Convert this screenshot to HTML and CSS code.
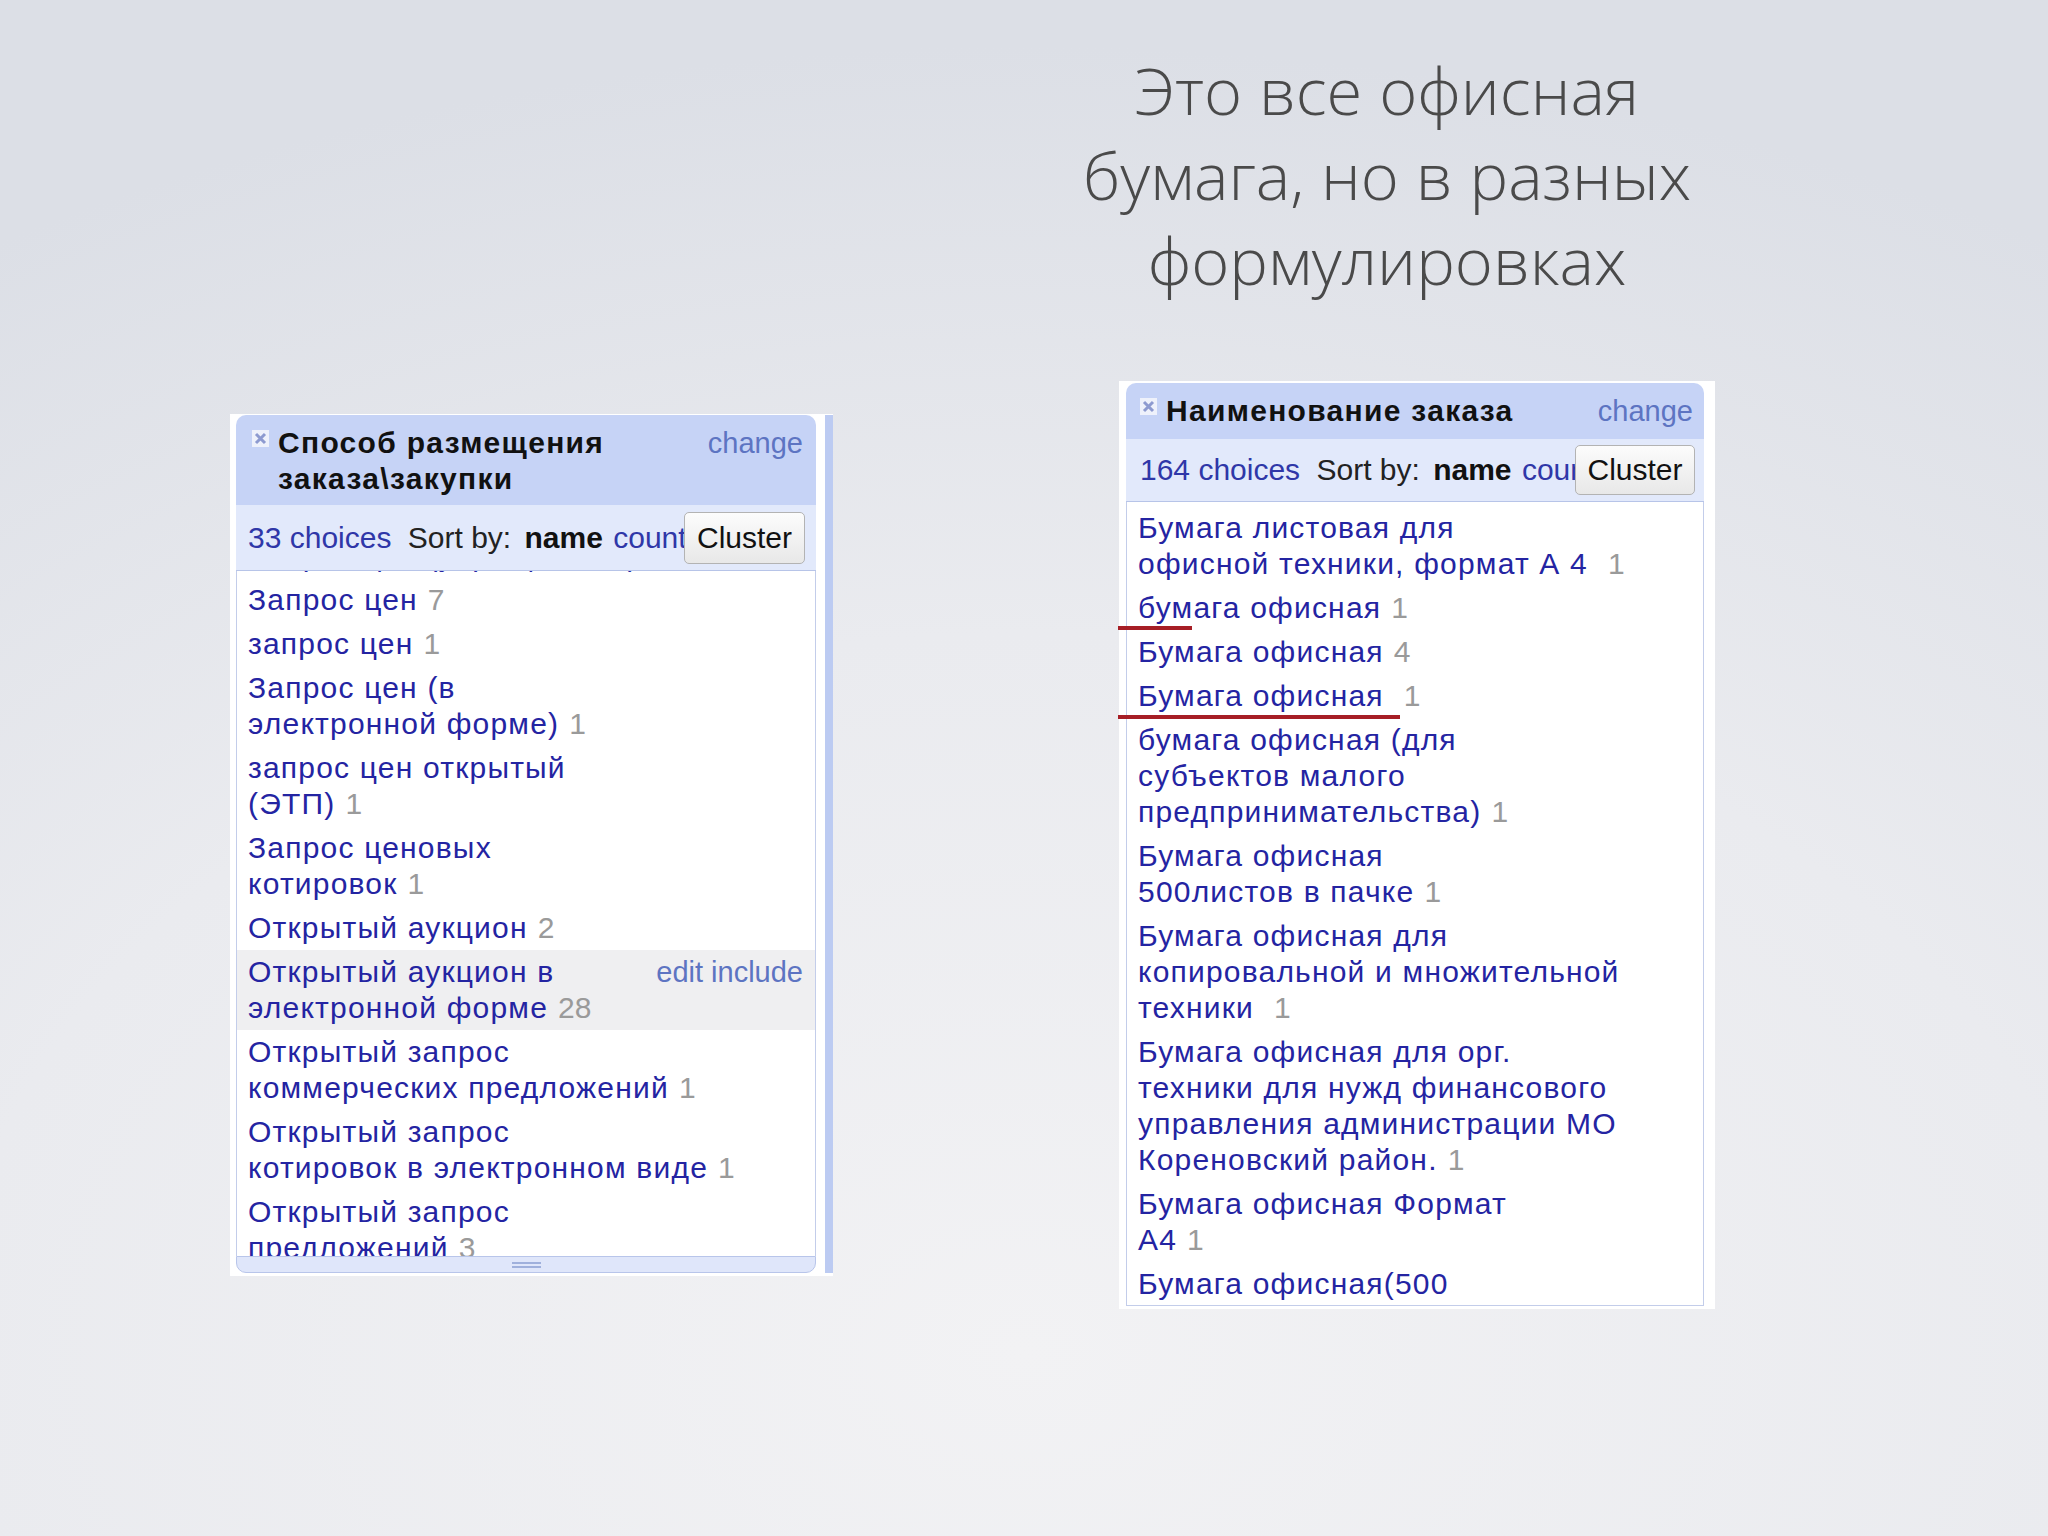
FILE: index.html
```html
<!DOCTYPE html>
<html lang="ru">
<head>
<meta charset="utf-8">
<title>Это все офисная бумага</title>
<link rel="stylesheet" href="styles.css">
</head>
<body>
<div class="slide">
  <h1 class="title">Это все офисная<br>бумага, но в разных<br>формулировках</h1>
  <div class="panels">
    <div class="frame frame-left">
      <div class="facet">
        <div class="head">
          <svg class="close" width="17" height="17" viewBox="0 0 17 17"><rect width="17" height="17" fill="#eef1fb"/><path d="M4 4L13 13M13 4L4 13" stroke="#8d9ad0" stroke-width="3"/></svg>
          <div class="head-title">Способ размещения<br>заказа\закупки</div>
          <a class="change">change</a>
        </div>
        <div class="ctrl">
          <div class="ctrl-text"><a class="choices">33 choices</a> <span class="sort">Sort by:</span> <b class="name">name</b> <a class="count">count</a></div>
          <button class="cluster">Cluster</button>
        </div>
        <div class="list">
          <div class="list-inner scrolled">
            <div class="item">Запрос цен (упрощенный)<span class="cnt">1</span></div>
            <div class="item">Запрос цен<span class="cnt">7</span></div>
            <div class="item">запрос цен<span class="cnt">1</span></div>
            <div class="item">Запрос цен (в<br>электронной форме)<span class="cnt">1</span></div>
            <div class="item">запрос цен открытый<br>(ЭТП)<span class="cnt">1</span></div>
            <div class="item">Запрос ценовых<br>котировок<span class="cnt">1</span></div>
            <div class="item">Открытый аукцион<span class="cnt">2</span></div>
            <div class="item hl"><span class="edit">edit include</span>Открытый аукцион в<br>электронной форме<span class="cnt">28</span></div>
            <div class="item">Открытый запрос<br>коммерческих предложений<span class="cnt">1</span></div>
            <div class="item">Открытый запрос<br>котировок в электронном виде<span class="cnt">1</span></div>
            <div class="item">Открытый запрос<br>предложений<span class="cnt">3</span></div>
          </div>
        </div>
        <div class="grip"><span></span></div>
      </div>
      <div class="vbar"></div>
    </div>

    <div class="frame frame-right">
      <div class="facet">
        <div class="head head-one">
          <svg class="close" width="17" height="17" viewBox="0 0 17 17"><rect width="17" height="17" fill="#eef1fb"/><path d="M4 4L13 13M13 4L4 13" stroke="#8d9ad0" stroke-width="3"/></svg>
          <div class="head-title">Наименование заказа</div>
          <a class="change">change</a>
        </div>
        <div class="ctrl ctrl-one">
          <div class="ctrl-text"><a class="choices">164 choices</a> <span class="sort">Sort by:</span> <b class="name">name</b> <a class="count">count</a></div>
          <button class="cluster">Cluster</button>
        </div>
        <div class="list list-bottom">
          <div class="list-inner top">
            <div class="item">Бумага листовая для<br>офисной техники, формат А 4<span class="cnt wide">1</span></div>
            <div class="item">бумага офисная<span class="cnt">1</span></div>
            <div class="item">Бумага офисная<span class="cnt">4</span></div>
            <div class="item">Бумага офисная<span class="cnt wide">1</span></div>
            <div class="item">бумага офисная (для<br>субъектов малого<br>предпринимательства)<span class="cnt">1</span></div>
            <div class="item">Бумага офисная<br>500листов в пачке<span class="cnt">1</span></div>
            <div class="item">Бумага офисная для<br>копировальной и множительной<br>техники<span class="cnt wide">1</span></div>
            <div class="item">Бумага офисная для орг.<br>техники для нужд финансового<br>управления администрации МО<br>Кореновский район.<span class="cnt">1</span></div>
            <div class="item">Бумага офисная Формат<br>А4<span class="cnt">1</span></div>
            <div class="item">Бумага офисная(500<br>листов)<span class="cnt">1</span></div>
          </div>
        </div>
      </div>
      <div class="mark m1"></div>
      <div class="mark m2"></div>
    </div>
  </div>
</div>
</body>
</html>
```

FILE: styles.css
```css
* { box-sizing: border-box; }
html, body { margin: 0; padding: 0; }
body {
  width: 2048px;
  height: 1536px;
  overflow: hidden;
  background: radial-gradient(ellipse 95% 85% at 50% 88%, #f2f2f4 0%, #eaebef 55%, #dcdfe6 100%);
  font-family: "Liberation Sans", Arial, sans-serif;
}
.slide {
  width: 2048px;
  height: 1536px;
  padding-top: 48px;
}
.title {
  margin: 0 0 0 987px;
  width: 800px;
  text-align: center;
  font-family: "Open Sans", "Noto Sans", sans-serif;
  font-weight: 300;
  font-size: 65px;
  line-height: 85px;
  color: #4a4a4a;
}
.panels {
  display: flex;
  align-items: flex-start;
  padding-left: 230px;
  margin-top: 78px;
}
.frame {
  background: #fff;
  display: flex;
  position: relative;
}
.frame-left {
  width: 603px;
  height: 862px;
  margin-top: 33px;
  padding: 1px 0 3px 6px;
}
.frame-right {
  width: 596px;
  height: 928px;
  margin-left: 286px;
  padding: 2px 11px 3px 7px;
}
.vbar {
  width: 8px;
  margin-left: 9px;
  background: #bccbf2;
}
.facet {
  display: flex;
  flex-direction: column;
  width: 580px;
}
.frame-right .facet { width: 578px; }

.head {
  background: #c6d3f6;
  border-radius: 10px 10px 0 0;
  padding: 10px 13px 8px 16px;
  display: flex;
  align-items: flex-start;
  font-size: 30px;
  line-height: 36px;
}
.head-one { padding: 10px 11px 10px 14px; }
.close {
  flex-shrink: 0;
  margin-top: 5px;
  margin-right: 9px;
}
.head-title {
  font-weight: bold;
  color: #111;
  letter-spacing: 1.3px;
}
.change {
  margin-left: auto;
  color: #5d74c2;
  font-size: 29px;
}

.ctrl {
  height: 66px;
  background: #e2e9fb;
  border-bottom: 1px solid #b7c4e8;
  display: flex;
  align-items: center;
  padding: 0 11px 0 12px;
  font-size: 30px;
}
.ctrl-one {
  height: 63px;
  padding: 0 9px 0 14px;
}
.ctrl-text {
  flex: 1;
  min-width: 0;
  overflow: hidden;
  white-space: nowrap;
  color: #222;
}
.choices, .count { color: #2f37a8; }
.sort { margin-left: 8px; }
.name { margin-left: 5px; color: #111; }
.count { margin-left: 2px; }
.cluster {
  flex-shrink: 0;
  width: 121px;
  height: 52px;
  border: 1px solid #b3b3b3;
  border-radius: 5px;
  background: linear-gradient(#fcfcfc, #e8e8e8);
  font-family: "Liberation Sans", Arial, sans-serif;
  font-size: 30px;
  color: #111;
  padding: 0;
}
.ctrl-one .cluster { width: 120px; height: 50px; }

.list {
  flex: 1;
  min-height: 0;
  background: #fff;
  border-left: 1px solid #c3cdea;
  border-right: 1px solid #c3cdea;
  overflow: hidden;
}
.list-bottom { border-bottom: 1px solid #c3cdea; }
.list-inner.scrolled { margin-top: -37px; }
.list-inner.top { padding-top: 4px; }
.item {
  padding: 4px 12px 4px 11px;
  font-size: 30px;
  line-height: 36px;
  color: #2424a2;
  white-space: nowrap;
  letter-spacing: 1.2px;
}
.item.hl { background: #efeff1; }
.cnt {
  color: #9a9a9a;
  margin-left: 10px;
  letter-spacing: 0;
}
.cnt.wide { margin-left: 20px; }
.edit {
  float: right;
  color: #5d74c2;
  font-size: 29px;
  letter-spacing: 0;
}

.grip {
  height: 17px;
  background: #dfe6fa;
  border: 1px solid #b8c5ea;
  border-radius: 0 0 10px 10px;
  display: flex;
  justify-content: center;
  align-items: center;
}
.grip span {
  width: 29px;
  height: 6px;
  border-top: 2px solid #9fb0dc;
  border-bottom: 2px solid #9fb0dc;
}

.mark {
  position: absolute;
  left: -1px;
  height: 4px;
  background: #a61e25;
}
.m1 { top: 245px; width: 74px; }
.m2 { top: 334px; width: 282px; }
```
